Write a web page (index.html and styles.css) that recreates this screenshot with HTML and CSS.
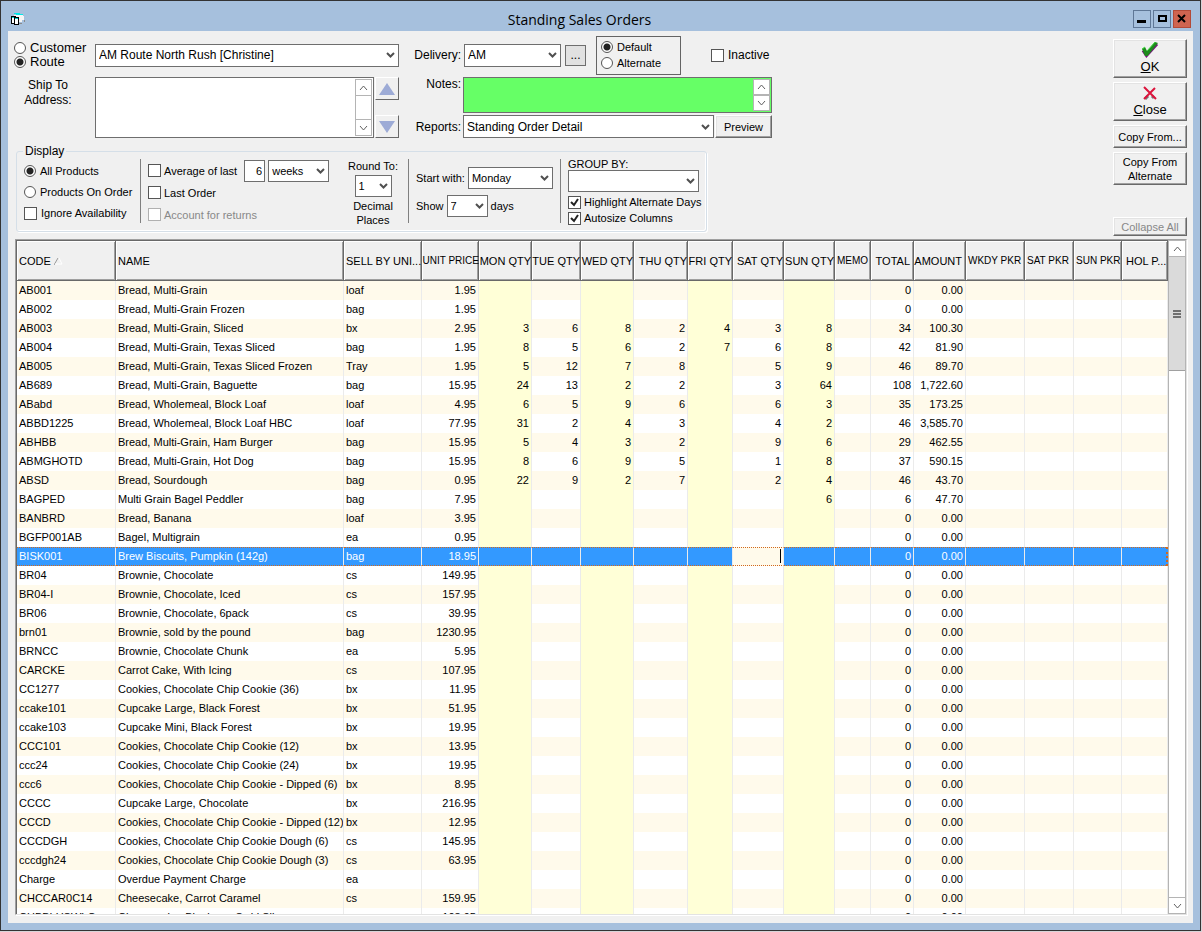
FILE: index.html
```html
<!DOCTYPE html>
<html lang="en">

<head>
    <meta charset="UTF-8" />
    <meta name="viewport" content="width=device-width, initial-scale=1.0" />
    <title>Standing Sales Orders</title>
    <link rel="stylesheet" href="styles.css">
</head>

<body>

    <div class="window">
        <header class="titlebar">
            <svg class="app-icon" width="16" height="14" viewBox="0 0 16 14" shape-rendering="crispEdges">
                <path d="M4 3h9v1h1v4h-2v2h-3v1h-5z" fill="#f4f4f4" />
                <path d="M4 1h6v1h-6zM6 2h7v1h-7z" fill="#00e8e8" />
                <path d="M14 8h1v2h-1zM9 11h3v1h-3z" fill="#888" />
                <path d="M1 4h5v8h-5z" />
                <path d="M4 5h5v8h-5z" />
                <path d="M2 6h2v5h-2zM5 7h3v5h-3z" fill="#fff" />
                <path d="M2 5h2v1h-2zM5 6h3v1h-3z" fill="#00d0d0" />
            </svg>
            <h1>Standing Sales Orders</h1>
            <div class="window-buttons">
                <button aria-label="Minimize"><svg width="16" height="16"><path d="M3 9h9v3h-9z" /></svg></button>
                <button aria-label="Maximize"><svg width="16" height="16"><path d="M4 4h9v7h-9z M6 6v3h5v-3z" fill-rule="evenodd" /></svg></button>
                <button class="close" aria-label="Close window"><svg width="16" height="16"><path d="M4 4l7 7M11 4l-7 7" stroke="#000" stroke-width="2" /></svg></button>
            </div>
        </header>

        <main class="content">
            <div class="toolbar">
                <div class="filters">
                    <div class="order-form">
                        <div class="target">
                            <label><input type="radio" name="target"> Customer</label>
                            <label><input type="radio" name="target" checked> Route</label>
                        </div>
                        <select class="route" aria-label="Route">
                            <option>AM Route North Rush [Christine]</option>
                        </select>
                        <label class="side-label" for="delivery">Delivery:</label>
                        <div class="delivery">
                            <select id="delivery">
                                <option>AM</option>
                            </select>
                            <button class="more">...</button>
                            <div class="mode">
                                <label><input type="radio" name="mode" checked> Default</label>
                                <label><input type="radio" name="mode"> Alternate</label>
                            </div>
                            <label class="inactive"><input type="checkbox"> Inactive</label>
                        </div>

                        <label class="ship-label" for="address">Ship To<br>Address:</label>
                        <div class="ship">
                            <div class="textbox">
                                <textarea id="address"></textarea>
                                <div class="scroll">
                                    <button aria-label="Scroll up"><svg width="9" height="6"><path d="M1 5l3.500-4l3.500 4" /></svg></button>
                                    <button aria-label="Scroll down"><svg width="9" height="6"><path d="M1 1l3.500 4l3.500-4" /></svg></button>
                                </div>
                            </div>
                            <div class="stepper">
                                <button aria-label="Previous"><svg width="16" height="12"><path d="M8 0l8 12h-16z" /></svg></button>
                                <button aria-label="Next"><svg width="16" height="12"><path d="M0 0h16l-8 12z" /></svg></button>
                            </div>
                        </div>
                        <label class="side-label top" for="notes">Notes:</label>
                        <div class="textbox notes">
                            <textarea id="notes"></textarea>
                            <div class="scroll">
                                <button aria-label="Scroll notes up"><svg width="9" height="6"><path d="M1 5l3.500-4l3.500 4" /></svg></button>
                                <button aria-label="Scroll notes down"><svg width="9" height="6"><path d="M1 1l3.500 4l3.500-4" /></svg></button>
                            </div>
                        </div>
                        <label class="side-label" for="reports">Reports:</label>
                        <div class="reports">
                            <select id="reports">
                                <option>Standing Order Detail</option>
                            </select>
                            <button class="raised">Preview</button>
                        </div>
                    </div>

                    <fieldset class="display">
                        <legend>Display</legend>
                        <div class="group products">
                            <label><input type="radio" name="products" checked> All Products</label>
                            <label><input type="radio" name="products"> Products On Order</label>
                            <label><input type="checkbox"> Ignore Availability</label>
                        </div>
                        <div class="group history">
                            <div class="line">
                                <label><input type="checkbox"> Average of last</label>
                                <input class="number" type="text" value="6" aria-label="Number of periods">
                                <select class="period" aria-label="Period">
                                    <option>weeks</option>
                                </select>
                            </div>
                            <label><input type="checkbox"> Last Order</label>
                            <label class="disabled"><input type="checkbox" disabled> Account for returns</label>
                        </div>
                        <div class="group rounding">
                            <label for="decimals">Round To:</label>
                            <select id="decimals">
                                <option>1</option>
                            </select>
                            <span>Decimal<br>Places</span>
                        </div>
                        <div class="group range">
                            <div class="line">
                                <label for="start">Start with:</label>
                                <select id="start">
                                    <option>Monday</option>
                                </select>
                            </div>
                            <div class="line">
                                <label for="days">Show</label>
                                <select id="days">
                                    <option>7</option>
                                </select>
                                <span>days</span>
                            </div>
                        </div>
                        <div class="group grouping">
                            <label for="groupby">GROUP BY:</label>
                            <select id="groupby">
                                <option></option>
                            </select>
                            <label><input type="checkbox" checked> Highlight Alternate Days</label>
                            <label><input type="checkbox" checked> Autosize Columns</label>
                        </div>
                    </fieldset>
                </div>

                <div class="actions">
                    <button class="raised big">
                        <svg width="18" height="16" viewBox="0 0 18 16">
                            <path d="M2 8.500l3.500 5L16 2" fill="none" stroke="#7a1080" stroke-width="3" />
                            <path d="M1 7l3-2l2 4l8-9l3 1l-10.500 13h-2.500z" fill="#1d8a1d" />
                            <path d="M1 7l3-2M6 9l8-9" stroke="#3ee03e" />
                        </svg>
                        <span><u>O</u>K</span>
                    </button>
                    <button class="raised big">
                        <svg width="18" height="16" viewBox="0 0 18 16">
                            <path d="M4 14l3-3M13 13l-2-2" stroke="#777" stroke-width="3" />
                            <path d="M3 2l12 12M14 3l-11 11" stroke="#dc143c" stroke-width="2" />
                        </svg>
                        <span><u>C</u>lose</span>
                    </button>
                    <button class="raised copy">Copy From...</button>
                    <button class="raised copy-alternate">Copy From Alternate</button>
                    <button class="raised collapse" disabled>Collapse All</button>
                </div>
            </div>

            <div class="grid">
                <div class="grid-view">
                    <table>
                        <colgroup>
                            <col class="c-code"><col><col class="c-unit"><col class="c-price">
                            <col class="c-mon"><col class="c-tue"><col class="c-wed"><col class="c-thu">
                            <col class="c-fri"><col class="c-sat"><col class="c-sun"><col class="c-memo">
                            <col class="c-total"><col class="c-amount"><col class="c-wkdy">
                            <col class="c-satpkr"><col class="c-sunpkr"><col class="c-hol">
                        </colgroup>
                        <thead>
                            <tr>
                                <th>CODE <svg class="sort" width="9" height="8"><path d="M0 8l4-7" stroke="#999" /><path d="M5 1l3 6h-7" stroke="#fff" fill="none" /></svg></th>
                                <th>NAME</th>
                                <th>SELL BY UNI...</th>
                                <th class="num tight">UNIT PRICE</th>
                                <th class="num">MON QTY</th>
                                <th class="num">TUE QTY</th>
                                <th class="num">WED QTY</th>
                                <th class="num">THU QTY</th>
                                <th class="num">FRI QTY</th>
                                <th class="num">SAT QTY</th>
                                <th class="num">SUN QTY</th>
                                <th class="tight">MEMO</th>
                                <th class="num sum">TOTAL</th>
                                <th class="num sum">AMOUNT</th>
                                <th class="tight">WKDY PKR</th>
                                <th class="tight">SAT PKR</th>
                                <th class="tight">SUN PKR</th>
                                <th class="hol">HOL P...</th>
                            </tr>
                        </thead>
                        <tbody id="orders"></tbody>
                    </table>
                </div>
                <div class="scrollbar">
                    <button aria-label="Scroll list up"><svg width="9" height="6"><path d="M1 5l3.500-4l3.500 4" /></svg></button>
                    <div class="thumb"><i></i><i></i><i></i></div>
                    <button class="down" aria-label="Scroll list down"><svg width="9" height="6"><path d="M1 1l3.500 4l3.500-4" /></svg></button>
                </div>
            </div>
        </main>
    </div>

    <script src="script.js"></script>

</body>

</html>
```
FILE: styles.css
```css
* {
    box-sizing: border-box;
}

body {
    margin: 0;
    padding: 0 1px 1px 0;
    height: 100vh;
    background: #d8d4d8;
    color: #000;
    font-family: "Liberation Sans", Arial, sans-serif;
    font-size: 11px;
    line-height: 14px;
}

button,
input,
select,
textarea {
    font: inherit;
    color: inherit;
    margin: 0;
}

.window {
    height: 100%;
    display: flex;
    flex-direction: column;
    background: #a6c0dd;
    border: 1px solid #333;
    padding: 0 7px 7px;
}

/* title bar */
.titlebar {
    height: 30px;
    display: flex;
    align-items: flex-start;
    padding: 9px 2px 0;
}

.app-icon {
    margin-top: 2px;
}

h1 {
    flex: 1;
    margin: 0;
    text-align: center;
    font-family: "Open Sans", "Noto Sans", sans-serif;
    font-size: 14px;
    line-height: 20px;
    font-weight: normal;
}

.window-buttons {
    display: flex;
    gap: 2px;
}

.window-buttons button {
    width: 18px;
    height: 18px;
    padding: 0;
    background: #a6c0dd;
    border: 1px solid #5f7796;
}

.window-buttons .close {
    background: #cf6450;
    border-color: #b34a38;
}

.window-buttons svg {
    display: block;
}

.content {
    flex: 1;
    min-height: 0;
    display: flex;
    flex-direction: column;
    background: #f0f0f0;
    padding: 4px 6px 8px 7px;
}

.toolbar {
    display: flex;
    justify-content: space-between;
    margin-bottom: 3px;
}

.filters {
    padding-bottom: 4px;
}

/* controls */
label {
    display: flex;
    align-items: center;
    gap: 4px;
    white-space: nowrap;
}

input[type="radio"],
input[type="checkbox"] {
    appearance: none;
    flex: none;
    width: 13px;
    height: 13px;
    background: #fff;
    border: 1px solid #555;
}

input[type="radio"] {
    width: 12px;
    height: 12px;
    border-radius: 50%;
}

input[type="radio"]:checked {
    background: radial-gradient(circle, #222 3px, #fff 4px);
}

input[type="checkbox"]:checked {
    background: #fff url("data:image/svg+xml,%3Csvg xmlns='http://www.w3.org/2000/svg' width='11' height='11'%3E%3Cpath d='M2 5l3 3l4-6' fill='none' stroke='%23222' stroke-width='2'/%3E%3C/svg%3E") center no-repeat;
}

input[type="checkbox"]:disabled {
    border-color: #b0b0b0;
}

.disabled {
    color: #888;
}

select {
    appearance: none;
    flex: none;
    height: 22px;
    padding: 0 18px 0 3px;
    border: 1px solid #6e6e6e;
    border-radius: 0;
    background: #fff url("data:image/svg+xml,%3Csvg xmlns='http://www.w3.org/2000/svg' width='9' height='6'%3E%3Cpath d='M1 1l3.500 3.500l3.500-3.500' fill='none' stroke='%23505050' stroke-width='2'/%3E%3C/svg%3E") right 3px center no-repeat;
}

.raised {
    padding: 0;
    background: #f0f0f0;
    border: 1px solid;
    border-color: #fff #696969 #696969 #fff;
    box-shadow: inset -1px -1px #a0a0a0, inset 1px 1px #e3e3e3;
}

.raised:disabled {
    color: #888;
}

/* order form */
.order-form {
    display: grid;
    grid-template-columns: 80px 304px 64px 309px;
    grid-template-rows: 40px 36px 23px;
    gap: 2px 0;
    font-size: 12px;
    align-items: center;
}

.target {
    font-size: 13px;
    margin-left: -1px;
}

.order-form .route,
.order-form #delivery,
.order-form #reports {
    height: 23px;
}

.side-label {
    justify-content: flex-end;
    padding-right: 2px;
}

.side-label.top {
    align-self: start;
}

.delivery,
.reports {
    display: flex;
    align-items: center;
}

#delivery {
    width: 97px;
    margin-left: 1px;
}

.more {
    width: 21px;
    height: 21px;
    margin: 0 10px 0 4px;
    padding: 0;
    background: #e1e1e1;
    border: 1px solid #6e6e6e;
}

.mode {
    width: 85px;
    height: 39px;
    display: flex;
    flex-direction: column;
    justify-content: center;
    gap: 2px;
    padding-left: 4px;
    border: 1px solid #646464;
    font-size: 11px;
}

.inactive {
    margin-left: 30px;
}

.ship-label {
    grid-row: 2 / 4;
    align-self: start;
    justify-content: center;
    margin-right: 14px;
    padding-top: 1px;
    text-align: center;
    line-height: 15px;
}

.ship {
    grid-row: 2 / 4;
    align-self: stretch;
    display: flex;
    gap: 1px;
}

.textbox {
    flex: 1;
    align-self: stretch;
    display: flex;
    background: #fff;
    border: 1px solid #6e6e6e;
    padding: 1px;
}

.textbox textarea {
    flex: 1;
    width: 100%;
    border: 0;
    padding: 2px;
    resize: none;
    background: transparent;
}

.notes {
    background: #66ff66;
}

.scroll {
    width: 17px;
    display: flex;
    flex-direction: column;
    justify-content: space-between;
    background: #fff;
    border: 1px solid #b4b4b4;
}

.scroll button,
.scrollbar button {
    height: 16px;
    padding: 0;
    display: flex;
    align-items: center;
    justify-content: center;
    background: #fff;
    border: 0;
    border-bottom: 1px solid #b4b4b4;
}

.scroll button:last-child,
.scrollbar .down {
    border-bottom: 0;
    border-top: 1px solid #b4b4b4;
}

.notes .scroll button {
    height: 15px;
}

.scroll path,
.scrollbar path {
    fill: none;
    stroke: #606060;
}

.stepper {
    width: 24px;
    display: flex;
    flex-direction: column;
    justify-content: space-between;
}

.stepper button {
    height: 23px;
    padding: 0;
    background: #f0f0f0;
    border: 1px solid;
    border-color: #fff #696969 #696969 #fff;
}

.stepper svg {
    display: block;
    margin: 0 auto;
}

.stepper path {
    fill: #9dabd6;
}

.reports #reports {
    width: 251px;
}

.reports .raised {
    flex: 1;
    height: 23px;
    margin-left: 1px;
    font-size: 11px;
}

/* display options */
.display {
    width: 691px;
    margin: 6px 0 0 1px;
    padding: 1px 0 8px 7px;
    display: flex;
    border: 1px solid #d5dfe8;
    border-radius: 3px;
    box-shadow: inset -1px -1px #fff, 1px 1px #fff;
}

.display legend {
    font-size: 12px;
    padding: 0 2px;
    margin-left: -1px;
}

.group {
    height: 64px;
    display: flex;
    flex-direction: column;
    border-left: 1px solid #808080;
    padding-left: 7px;
}

.products {
    width: 116px;
    padding: 5px 0 3px;
    justify-content: space-between;
    border: 0;
}

.history {
    width: 203px;
    gap: 5px;
}

.history label {
    gap: 3px;
    height: 17px;
}

.line {
    display: flex;
    align-items: center;
    gap: 3px;
}

.history .line {
    height: 24px;
    margin-bottom: -3px;
}

.number {
    width: 21px;
    height: 22px;
    margin-left: 4px;
    padding: 0 2px;
    text-align: right;
    border: 1px solid #6e6e6e;
}

.period {
    width: 61px;
}

.rounding {
    width: 60px;
    align-items: center;
    text-align: center;
    padding: 0;
    border: 0;
    gap: 2px;
}

.range {
    width: 152px;
    gap: 6px;
    margin-left: 5px;
    padding-top: 8px;
}

#decimals {
    width: 37px;
}

#start {
    width: 85px;
}

#days {
    width: 41px;
}

.grouping label {
    gap: 3px;
    line-height: 11px;
}

.grouping #groupby {
    width: 131px;
    margin-bottom: 4px;
}

.grouping label + label {
    margin-top: 3px;
}

/* action buttons */
.actions {
    width: 74px;
    padding-top: 4px;
    display: flex;
    flex-direction: column;
    gap: 4px;
}

.big {
    height: 39px;
    display: flex;
    flex-direction: column;
    align-items: center;
    font-size: 13px;
    padding-top: 1px;
}

.big svg {
    margin-top: 1px;
}

.big span {
    line-height: 18px;
}

.copy {
    height: 23px;
}

.copy-alternate {
    height: 33px;
    padding: 0 6px;
}

.collapse {
    height: 19px;
    margin-top: auto;
}

/* product grid */
.grid {
    flex: 1;
    min-height: 0;
    display: flex;
    background: #fff;
    border: 1px solid;
    border-color: #a0a0a0 #e3e3e3 #e3e3e3 #a0a0a0;
    box-shadow: 1px 1px #fff;
}

.grid-view {
    flex: 1;
    min-width: 0;
    overflow: hidden;
    border-top: 1px solid #696969;
    border-left: 1px solid #696969;
}

table {
    width: 100%;
    table-layout: fixed;
    border-collapse: separate;
    border-spacing: 0;
}

th,
td {
    padding: 0 2px;
    text-align: left;
    font-weight: normal;
    white-space: nowrap;
    overflow: hidden;
}

th {
    height: 40px;
    padding: 0 0 0 2px;
    background: #f0f0f0;
    box-shadow: inset -1px -1px #696969, inset 1px 1px #fff, inset -2px -2px #a0a0a0;
}

th.num {
    padding: 0 1px 0 0;
}

th.num.sum {
    padding-right: 4px;
}

th.tight {
    font-size: 10px;
    padding-right: 0;
}

th.hol {
    padding-left: 4px;
}

td {
    height: 19px;
    padding-bottom: 2px;
    border-right: 1px solid #ebebeb;
}

.num {
    text-align: right;
}

tbody tr:nth-child(odd) {
    background: #fffaeb;
}

tbody td.alt {
    background: #ffffd7;
}

tbody tr.selected,
tbody tr.selected td {
    background: #3399ff;
    color: #fff;
}

tr.selected td {
    border-top: 1px dotted #d2691e;
    border-bottom: 1px dotted #d2691e;
}

tr.selected td:last-child {
    border-right: 2px dotted #d2691e;
}

tbody tr.selected td.editing {
    background: #fffaeb;
}

.editing input {
    display: block;
    width: 100%;
    height: 14px;
    padding: 0;
    border: 0;
    border-right: 1px solid #000;
    background: transparent;
    text-align: right;
    color: #000;
}

.c-code { width: 99px; }
.c-unit { width: 78px; }
.c-price { width: 57px; }
.c-mon, .c-wed { width: 53px; }
.c-tue, .c-satpkr { width: 49px; }
.c-thu { width: 54px; }
.c-fri { width: 45px; }
.c-sat, .c-sun { width: 51px; }
.c-memo { width: 36px; }
.c-total { width: 43px; }
.c-amount { width: 52px; }
.c-wkdy { width: 59px; }
.c-sunpkr { width: 48px; }
.c-hol { width: 46px; }

.scrollbar {
    width: 18px;
    display: flex;
    flex-direction: column;
    border: 1px solid #b4b4b4;
    background: #fff;
}

.scrollbar .down {
    margin-top: auto;
}

.thumb {
    height: 114px;
    display: flex;
    flex-direction: column;
    align-items: center;
    justify-content: center;
    gap: 1px;
    background: #dadada;
    border-bottom: 1px solid #a0a0a0;
}

.thumb i {
    width: 8px;
    height: 2px;
    background: #707070;
}
```
FILE: script.js
```js
// code, name, unit, price, mon..sun, total, amount
const orders = [
    ['AB001', 'Bread, Multi-Grain', 'loaf', '1.95'],
    ['AB002', 'Bread, Multi-Grain Frozen', 'bag', '1.95'],
    ['AB003', 'Bread, Multi-Grain, Sliced', 'bx', '2.95', [3, 6, 8, 2, 4, 3, 8], 34, '100.30'],
    ['AB004', 'Bread, Multi-Grain, Texas Sliced', 'bag', '1.95', [8, 5, 6, 2, 7, 6, 8], 42, '81.90'],
    ['AB005', 'Bread, Multi-Grain, Texas Sliced Frozen', 'Tray', '1.95', [5, 12, 7, 8, '', 5, 9], 46, '89.70'],
    ['AB689', 'Bread, Multi-Grain, Baguette', 'bag', '15.95', [24, 13, 2, 2, '', 3, 64], 108, '1,722.60'],
    ['ABabd', 'Bread, Wholemeal, Block Loaf', 'loaf', '4.95', [6, 5, 9, 6, '', 6, 3], 35, '173.25'],
    ['ABBD1225', 'Bread, Wholemeal, Block Loaf HBC', 'loaf', '77.95', [31, 2, 4, 3, '', 4, 2], 46, '3,585.70'],
    ['ABHBB', 'Bread, Multi-Grain, Ham Burger', 'bag', '15.95', [5, 4, 3, 2, '', 9, 6], 29, '462.55'],
    ['ABMGHOTD', 'Bread, Multi-Grain, Hot Dog', 'bag', '15.95', [8, 6, 9, 5, '', 1, 8], 37, '590.15'],
    ['ABSD', 'Bread, Sourdough', 'bag', '0.95', [22, 9, 2, 7, '', 2, 4], 46, '43.70'],
    ['BAGPED', 'Multi Grain Bagel Peddler', 'bag', '7.95', ['', '', '', '', '', '', 6], 6, '47.70'],
    ['BANBRD', 'Bread, Banana', 'loaf', '3.95'],
    ['BGFP001AB', 'Bagel, Multigrain', 'ea', '0.95'],
    ['BISK001', 'Brew Biscuits, Pumpkin (142g)', 'bag', '18.95'],
    ['BR04', 'Brownie, Chocolate', 'cs', '149.95'],
    ['BR04-I', 'Brownie, Chocolate, Iced', 'cs', '157.95'],
    ['BR06', 'Brownie, Chocolate, 6pack', 'cs', '39.95'],
    ['brn01', 'Brownie, sold by the pound', 'bag', '1230.95'],
    ['BRNCC', 'Brownie, Chocolate Chunk', 'ea', '5.95'],
    ['CARCKE', 'Carrot Cake, With Icing', 'cs', '107.95'],
    ['CC1277', 'Cookies, Chocolate Chip Cookie (36)', 'bx', '11.95'],
    ['ccake101', 'Cupcake Large, Black Forest', 'bx', '51.95'],
    ['ccake103', 'Cupcake Mini, Black Forest', 'bx', '19.95'],
    ['CCC101', 'Cookies, Chocolate Chip Cookie (12)', 'bx', '13.95'],
    ['ccc24', 'Cookies, Chocolate Chip Cookie (24)', 'bx', '19.95'],
    ['ccc6', 'Cookies, Chocolate Chip Cookie - Dipped (6)', 'bx', '8.95'],
    ['CCCC', 'Cupcake Large, Chocolate', 'bx', '216.95'],
    ['CCCD', 'Cookies, Chocolate Chip Cookie - Dipped (12)', 'bx', '12.95'],
    ['CCCDGH', 'Cookies, Chocolate Chip Cookie Dough (6)', 'cs', '145.95'],
    ['cccdgh24', 'Cookies, Chocolate Chip Cookie Dough (3)', 'cs', '63.95'],
    ['Charge', 'Overdue Payment Charge', 'ea', ''],
    ['CHCCAR0C14', 'Cheesecake, Carrot Caramel', 'cs', '159.95'],
    ['CHBBLUSWLC', 'Cheesecake, Blueberry Swirl Slice', 'cs', '108.95']
];

const selectedCode = 'BISK001';
const body = document.getElementById('orders');

orders.forEach(([code, name, unit, price, days = Array(7).fill(''), total = 0, amount = '0.00']) => {
    const row = body.insertRow();
    const selected = code === selectedCode;
    if (selected) row.className = 'selected';

    const addCell = (text, className = '') => {
        const cell = row.insertCell();
        cell.textContent = text;
        cell.className = className;
        return cell;
    };

    addCell(code);
    addCell(name);
    addCell(unit);
    addCell(price, 'num');
    days.forEach((qty, i) => {
        const cell = addCell(qty, i % 2 === 0 ? 'num alt' : 'num');
        if (selected && i === 5) {
            cell.classList.add('editing');
            cell.innerHTML = '<input type="text" aria-label="Saturday quantity">';
        }
    });
    addCell('');
    addCell(total, 'num');
    addCell(amount, 'num');
    for (let i = 0; i < 4; i++) addCell('');
});
```
